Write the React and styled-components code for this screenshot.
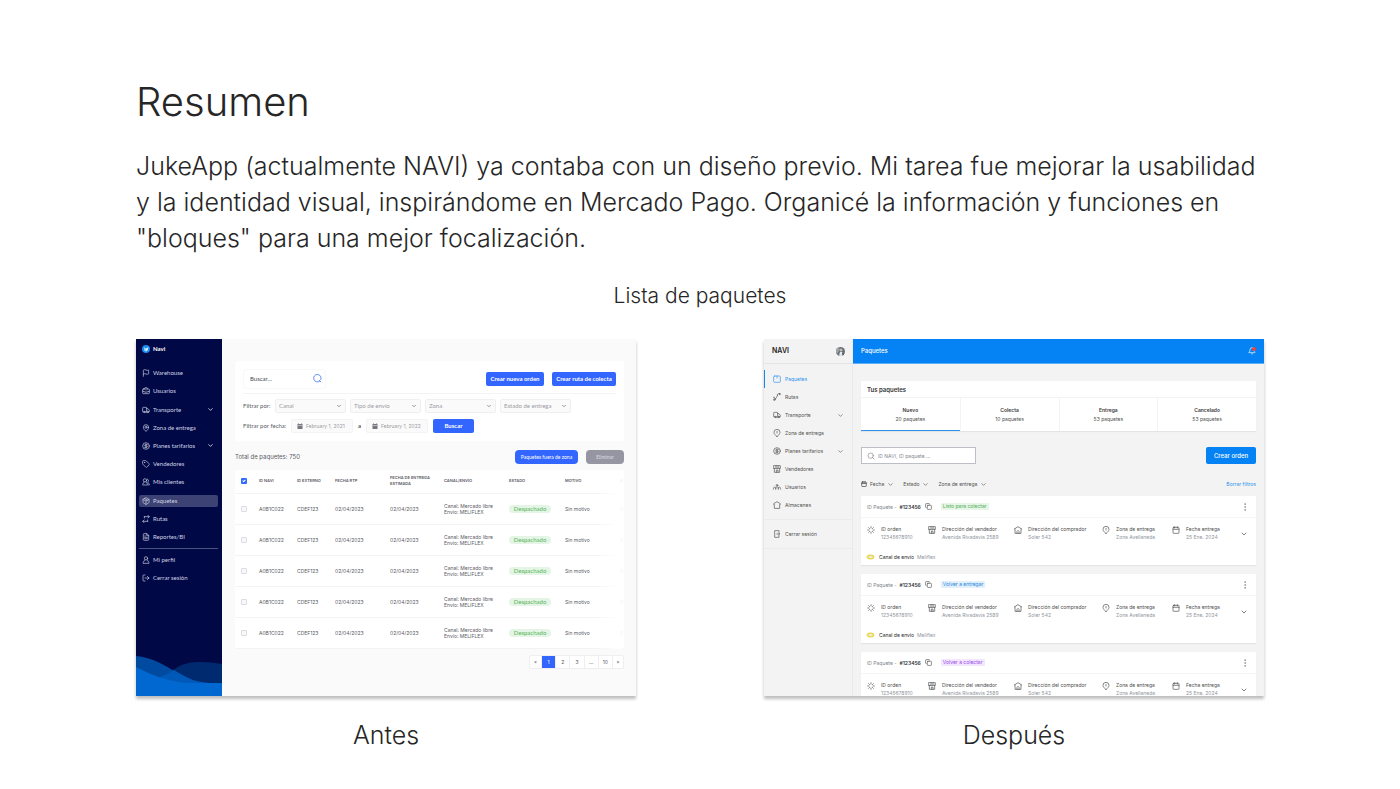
import React from "react";
import styled, { createGlobalStyle, css } from "styled-components";
import {
  Flag, BriefcaseBusiness, Truck, MapPin, CircleDollarSign, Tag, Package,
  FileText, LogOut, ChevronDown, Search, Calendar, Copy, EllipsisVertical, Loader, Bell,
} from "lucide-react";

const Global = createGlobalStyle`
  *, *::before, *::after { box-sizing: border-box; }
  body { margin: 0; background: #fff; font-family: Inter, "Liberation Sans", sans-serif; color: #262626; }
  h1, h2, p, ul, figure { margin: 0; padding: 0; }
  ul { list-style: none; }
  a { color: inherit; text-decoration: none; }
  button, input, select { font: inherit; color: inherit; margin: 0; }
  svg { flex: none; display: block; }
`;

/* ---------- Page ---------- */
const Page = styled.main`
  padding: 78px 136px 36px;
`;
const Title = styled.h1`
  font-size: 40px;
  font-weight: 300;
  line-height: 48px;
  margin-bottom: 22px;
`;
const Lead = styled.p`
  font-size: 25px;
  font-weight: 300;
  line-height: 36px;
`;
const Subtitle = styled.h2`
  margin: 25px 0 28px;
  font-size: 21px;
  font-weight: 300;
  line-height: 30px;
  text-align: center;
`;
const Comparison = styled.div`
  display: grid;
  grid-template-columns: 1fr 1fr;
  gap: 128px;
`;
const Caption = styled.figcaption`
  margin-top: 21px;
  font-size: 25px;
  font-weight: 300;
  line-height: 36px;
  text-align: center;
`;
const Screen = styled.div`
  display: flex;
  aspect-ratio: 500 / 357;
  overflow: hidden;
  background: ${(p) => p.$bg};
  box-shadow: 0 3px 3px rgba(0, 0, 0, 0.26);
  font-size: 5px;
  line-height: 6px;
`;
const latoSmall = css`
  font-family: Lato, "Liberation Sans", sans-serif;
  font-size: 6px;
  line-height: 8px;
`;

/* ---------- Before ---------- */
const DarkSide = styled.nav`
  ${latoSmall}
  display: flex;
  flex-direction: column;
  flex: none;
  width: 86px;
  background: #000846;
  color: #d0d3e4;
`;
const Brand = styled.div`
  display: flex;
  align-items: center;
  gap: 3px;
  height: 20px;
  margin-bottom: 5px;
  padding-left: 6px;
  color: #fff;
  font-weight: 700;
`;
const DarkList = styled.ul`
  display: flex;
  flex-direction: column;
  height: ${(p) => p.$height}px;
  padding: 0 4px 0 3px;
`;
const DarkItem = styled.li`
  display: flex;
  align-items: center;
  flex: 1;
`;
const DarkLink = styled.a`
  display: flex;
  align-items: center;
  flex: 1;
  gap: 3px;
  height: 12px;
  padding: 0 4px 0 3px;
  border-radius: 2px;
  background: ${(p) => (p.$active ? "#3c4273" : "transparent")};
`;
const Label = styled.span`
  flex: 1;
  white-space: nowrap;
`;
const DarkRule = styled.hr`
  width: 79px;
  height: 1px;
  margin: 2px 4px 2px 3px;
  border: 0;
  background: #4d537f;
`;
const WaveArt = styled.svg`
  width: 100%;
  height: 42px;
  margin-top: auto;
`;
const OldMain = styled.div`
  flex: 1;
  min-width: 0;
  padding: 22px 12px 0 13px;
  color: #5a5a64;
`;
const FilterCard = styled.section`
  ${latoSmall}
  height: 80px;
  padding: 8px;
  border-radius: 3px;
  background: #fff;
`;
const Bar = styled.div`
  display: flex;
  align-items: center;
  gap: ${(p) => p.$gap || 0}px;
`;
const TopBar = styled(Bar)`
  height: 25px;
  padding-bottom: 5px;
  border-bottom: 1px solid #f3f3f5;
  margin-bottom: 5px;
`;
const SearchBox = styled.label`
  display: flex;
  align-items: center;
  width: 83px;
  height: 20px;
  margin-right: auto;
  padding: 0 3px 0 6px;
  border: 1px solid #f8f8f8;
  border-radius: 3px;
  color: #3366ff;
`;
const BareInput = styled.input`
  flex: 1;
  width: 100%;
  min-width: 0;
  padding: 0;
  border: 0;
  outline: 0;
  background: none;
  color: ${(p) => p.$color || "#4a4a55"};
  &::placeholder { color: ${(p) => p.$color || "#4a4a55"}; opacity: 1; }
`;
const BlueButton = styled.button`
  width: ${(p) => p.$width}px;
  height: 14px;
  padding: 0;
  border: 0;
  border-radius: ${(p) => p.$radius || 2}px;
  background: ${(p) => (p.$muted ? "#9696a2" : "#3366ff")};
  color: ${(p) => (p.$muted ? "#dcdce2" : "#fff")};
  font-family: Lato, "Liberation Sans", sans-serif;
  font-size: ${(p) => (p.$small ? 5 : 6)}px;
  font-weight: ${(p) => (p.$small ? 400 : 700)};
  white-space: nowrap;
`;
const FieldText = styled.span`
  width: ${(p) => p.$width}px;
  white-space: nowrap;
`;
const SelectWrap = styled.label`
  position: relative;
  width: 71px;
  color: #77777f;
  svg { position: absolute; right: 4px; top: 4px; pointer-events: none; }
`;
const Select = styled.select`
  display: block;
  appearance: none;
  width: 100%;
  height: 14px;
  padding: 0 12px 0 3px;
  border: 1px solid #efeff1;
  border-radius: 2px;
  background: #fafafa;
  color: #9b9ba3;
`;
const DateBox = styled.label`
  display: flex;
  align-items: center;
  gap: 3px;
  width: 62px;
  height: 14px;
  padding: 0 5px;
  border: 1px solid #f3f3f4;
  border-radius: 2px;
  background: #fafafa;
  color: #77777f;
  font-family: Inter, "Liberation Sans", sans-serif;
  font-size: 5px;
`;
const DateRow = styled(Bar)`
  margin-top: 6px;
`;
const DateGap = styled.span`
  width: 13px;
  text-align: center;
  font-weight: 700;
`;
const SearchButton = styled(BlueButton)`
  margin-left: 5px;
`;
const TotalRow = styled(Bar)`
  height: 14px;
  margin: 9px 0 6px;
`;
const Total = styled.p`
  flex: 1;
  font-size: 6px;
  line-height: 8px;
`;
const TableWrap = styled.div`
  position: relative;
  overflow: hidden;
  border-radius: 3px;
  background: #fff;
  &::after {
    content: "";
    position: absolute;
    inset: 0 0 0 auto;
    width: 28px;
    background: linear-gradient(90deg, rgba(255, 255, 255, 0), rgba(255, 255, 255, 0.9) 70%);
    pointer-events: none;
  }
`;
const Table = styled.table`
  width: 100%;
  table-layout: fixed;
  border-collapse: collapse;
  th, td {
    padding: 0;
    border-bottom: 1px solid #f3f3f5;
    text-align: left;
    white-space: nowrap;
  }
  th { height: 23px; font-size: 4px; line-height: 6px; font-weight: 600; }
  td { height: 31px; }
`;
const Col = styled.col`
  width: ${(p) => (p.$w ? p.$w + "px" : "auto")};
`;
const Check = styled.input`
  appearance: none;
  position: relative;
  display: block;
  width: 6px;
  height: 6px;
  margin: 0 0 0 6px;
  border: 1px solid #dcdde2;
  border-radius: 1px;
  background: #f8f8fa;
  &:checked {
    border: 0;
    background: #2f6bff;
  }
  &:checked::after {
    content: "";
    position: absolute;
    left: 2px;
    top: 1px;
    width: 2px;
    height: 3px;
    border: solid #fff;
    border-width: 0 1px 1px 0;
    transform: rotate(45deg);
  }
`;
const Status = styled.span`
  display: block;
  width: 42px;
  height: 8px;
  border-radius: 4px;
  background: #e4f5e6;
  color: #57b45b;
  font-family: Lato, "Liberation Sans", sans-serif;
  font-size: 6px;
  line-height: 8px;
  text-align: center;
`;
const Pager = styled.nav`
  display: flex;
  width: 95px;
  height: 14px;
  margin: 6px 0 0 auto;
  border: 1px solid #efeff1;
  border-radius: 2px;
  background: #fff;
`;
const PageButton = styled.button`
  flex: ${(p) => (p.$end ? "0 0 11px" : "1")};
  padding: 0;
  border: 0;
  border-left: ${(p) => (p.$first ? 0 : 1)}px solid #efeff1;
  background: ${(p) => (p.$on ? "#3366ff" : "transparent")};
  color: ${(p) => (p.$on ? "#fff" : "inherit")};
  line-height: 12px;
`;

/* ---------- After ---------- */
const LightSide = styled.nav`
  flex: none;
  width: 89px;
  border-right: 1px solid #eaeaea;
  color: #505050;
`;
const LightHead = styled.div`
  display: flex;
  align-items: center;
  justify-content: space-between;
  height: 25px;
  padding: 0 7px 0 8px;
  border-bottom: 1px solid #e4e4e4;
`;
const Logo = styled.span`
  color: #222;
  font-size: 7px;
  line-height: 8px;
  font-weight: 600;
`;
const LightList = styled.ul`
  padding: 6px 0 5px;
  & + & { padding: 5px 0; border: solid #ebebeb; border-width: 1px 0; }
`;
const LightLink = styled.a`
  display: flex;
  align-items: center;
  gap: 4px;
  height: 18px;
  padding: 0 8px 0 ${(p) => (p.$active ? 8 : 9)}px;
  border-left: ${(p) => (p.$active ? 1 : 0)}px solid #1687ef;
  color: ${(p) => (p.$active ? "#2d93f0" : "inherit")};
`;
const NewMain = styled.div`
  flex: 1;
  min-width: 0;
`;
const BlueHead = styled.header`
  display: flex;
  align-items: center;
  justify-content: space-between;
  height: 25px;
  padding: 0 8px;
  border-bottom: 1px solid #5caef6;
  background: #0583f5;
  color: #fff;
  font-size: 6px;
  line-height: 8px;
  font-weight: 500;
`;
const NewBody = styled.div`
  padding: 17px 8px 0;
`;
const Panel = styled.section`
  background: #fff;
  box-shadow: 0 1px 1px rgba(0, 0, 0, 0.06);
`;
const PanelTitle = styled.p`
  height: 17px;
  padding-left: 6px;
  border-bottom: 1px solid #f3f3f3;
  font-size: 6px;
  line-height: 17px;
  font-weight: 600;
  color: #333;
`;
const Tabs = styled.div`
  display: grid;
  grid-template-columns: repeat(4, 1fr);
`;
const TabButton = styled.button`
  height: 33px;
  padding: 2px 0 0;
  border: 0;
  border-left: ${(p) => (p.$first ? 0 : 1)}px solid #f3f3f3;
  border-bottom: 1px solid ${(p) => (p.$first ? "#2d93f0" : "#fff")};
  background: none;
  color: #505050;
  line-height: 9px;
  strong, span { display: block; }
  strong { font-weight: 600; color: #3a3a3a; }
`;
const ActionRow = styled(Bar)`
  justify-content: space-between;
  margin-top: 16px;
`;
const NewSearch = styled.label`
  display: flex;
  align-items: center;
  gap: 3px;
  width: 115px;
  height: 17px;
  padding: 0 5px;
  border: 1px solid #bcbfc8;
  background: #fff;
  color: #85878f;
`;
const OrderButton = styled.button`
  width: 50px;
  height: 17px;
  padding: 0;
  border: 0;
  border-radius: 2px;
  background: #0583f5;
  color: #fff;
  font-size: 6px;
  font-weight: 500;
`;
const Filters = styled(Bar)`
  height: 12px;
  margin: 14px 0 6px;
`;
const FilterButton = styled.button`
  display: flex;
  align-items: center;
  gap: 3px;
  margin-right: 9px;
  padding: 0;
  border: 0;
  background: none;
  color: #505050;
  line-height: 6px;
`;
const ClearLink = styled.a`
  margin-left: auto;
  color: #2d93f0;
`;
const Cards = styled.div`
  display: flex;
  flex-direction: column;
  gap: 9px;
`;
const CardHead = styled(Bar)`
  height: 22px;
  padding: 0 6px;
  border-bottom: 1px solid #f5f5f5;
  color: #7c828b;
  strong { color: #333; font-weight: 600; margin: 0 4px 0 3px; }
`;
const tones = {
  green: css`background: #e8f5e9; color: #4caf50;`,
  blue: css`background: #e2f0fc; color: #2584dc;`,
  violet: css`background: #f2e7fe; color: #9747e8;`,
};
const Badge = styled.span`
  margin: 0 auto 0 9px;
  padding: 0 2px;
  border-radius: 1px;
  line-height: 7px;
  ${(p) => tones[p.$tone]}
`;
const IconButton = styled.button`
  display: flex;
  justify-content: center;
  padding: 0;
  border: 0;
  background: none;
  color: #444;
`;
const Details = styled.div`
  display: grid;
  grid-template-columns: 61fr 86fr 88fr 70fr 66fr 12fr;
  align-items: center;
  height: 30px;
  padding: 0 6px;
`;
const Detail = styled.div`
  display: flex;
  gap: 6px;
  color: #4c4c4c;
  white-space: nowrap;
`;
const Muted = styled.span`
  color: #8f959e;
`;
const Value = styled(Muted)`
  display: block;
  margin-top: 2px;
`;
const Expand = styled(IconButton)`
  margin-top: 2px;
`;
const Channel = styled(Bar)`
  height: 17px;
  padding: 0 6px 0 5px;
`;
const ChannelName = styled.span`
  margin: 0 3px 0 4px;
`;
const BellButton = styled(IconButton)`
  position: relative;
  color: #fff;
  &::after {
    content: "";
    position: absolute;
    top: 0;
    right: 0;
    width: 4px;
    height: 4px;
    border-radius: 50%;
    background: #ef4444;
  }
`;

const line = { size: 8, strokeWidth: 2 };
const chevron = { size: 7, strokeWidth: 2 };

function Glyph({ size = 8, children }) {
  return (
    <svg width={size} height={size} viewBox="0 0 24 24" fill="none" stroke="currentColor" strokeWidth="2" strokeLinecap="round" strokeLinejoin="round" aria-hidden="true">
      {children}
    </svg>
  );
}
function ParcelIcon() {
  return <Glyph><rect x="2" y="3" width="20" height="19" rx="3" /><path d="M12 3v6" /></Glyph>;
}
function RouteIcon() {
  return <Glyph><circle cx="4" cy="20" r="2.5" /><circle cx="20" cy="3" r="1.5" fill="currentColor" /><path d="M1 13c3-2 5 0 5 4M7 18c5-2 3-8 6-10M13 8c-1-4 1-6 4-6" /></Glyph>;
}
function PinIcon() {
  return <Glyph><path d="M12 23C8 18 3 15 3 10a9 9 0 0 1 18 0c0 5-5 8-9 13Z" /><path d="M12 7v5" /></Glyph>;
}
function PeopleIcon() {
  return <Glyph><circle cx="12" cy="7" r="2.5" /><path d="M1 19c0-5 2-7 4-7s3 2 3 5M23 19c0-5-2-7-4-7s-3 2-3 5M8 19c0-5 2-8 4-8s4 3 4 8" /></Glyph>;
}
function WarehouseIcon() {
  return <Glyph><path d="M4 21V10H2V8l10-6 10 6v2h-2v11Z" /></Glyph>;
}
function StoreIcon() {
  return <Glyph><path d="M2 2h20v8H2ZM9 2v8M15 2v8M4 10v12h16V10M10 22v-7h5v7" /></Glyph>;
}
function HomeIcon() {
  return <Glyph><path d="M1 9l11-7 11 7M3 9v13h18V9M9 22v-6l3-3 3 3v6" /></Glyph>;
}
function ExitIcon() {
  return <Glyph><path d="M18 7V2H5v20h13v-5M11 12h9M17 9l3 3-3 3" /></Glyph>;
}
function SwapIcon() {
  return <Glyph><path d="M7 5h14M18 1l4 4-4 4M17 19H3M6 15l-4 4 4 4M7 5v4M17 19v-4" /></Glyph>;
}
function PersonIcon() {
  return <Glyph><circle cx="12" cy="7" r="5" /><path d="M8 12l-5 8v2h18v-2l-5-8" /></Glyph>;
}
function ClientsIcon() {
  return <Glyph><circle cx="9" cy="7" r="5" /><path d="M6 12l-4 7v2h15v-2l-4-7M16 3a5 5 0 0 1 1 9l5 7v2h-2" /></Glyph>;
}
function BubbleIcon() {
  return <Glyph size={9}><path d="M18 19a10 10 0 1 1 3-4M17 17l4 4" /></Glyph>;
}
function DateIcon() {
  return (
    <svg width="6" height="6" viewBox="0 0 12 12" fill="currentColor" aria-hidden="true">
      <path d="M1 2h2V0h1v2h4V0h1v2h2v10H1Zm1 3v1h8V5Z" />
    </svg>
  );
}
function BrandMark() {
  return (
    <svg width="8" height="8" viewBox="0 0 16 16" aria-hidden="true">
      <circle cx="8" cy="8" r="8" fill="#168bf2" />
      <path d="M4 5l4 2 5-3-2 7-3 2-4-3Z" fill="#dff2ff" />
      <path d="M4 5l4 2v6l-4-3Z" fill="#8fd0fa" />
    </svg>
  );
}
function Avatar() {
  return (
    <svg width="9" height="9" viewBox="0 0 18 18" role="img" aria-label="Usuario">
      <circle cx="9" cy="9" r="9" fill="#667078" />
      <path d="M0 9a9 9 0 0 1 7-9l-1 8-4 6Z" fill="#98a9a8" />
      <circle cx="10" cy="6" r="3" fill="#d3b9a8" />
      <path d="M6 17l2-7h5l2 6a9 9 0 0 1-9 1Z" fill="#e5e9eb" />
      <path d="M12 10l4 5-3 2Z" fill="#2e3a40" />
    </svg>
  );
}
function ChannelMark() {
  return (
    <svg width="9" height="6" viewBox="0 0 18 12" role="img" aria-label="Mercado Libre">
      <ellipse cx="9" cy="6" rx="7" ry="4" fill="#f6ec9c" stroke="#ecd21c" strokeWidth="2" />
      <path d="M4 5c3-1 7-1 10 0-2 2-3 3-5 3S6 7 4 5Z" fill="#fff" stroke="#c9c98f" strokeWidth="1" />
    </svg>
  );
}
function Waves() {
  return (
    <WaveArt viewBox="0 0 86 42" preserveAspectRatio="none" aria-hidden="true">
      <path d="M0 28C18 28 32 19 42 13 54 6 72 8 86 10V42H0Z" fill="#002a70" />
      <path d="M0 2C22 4 36 17 51 24 64 30 76 30 86 29V42H0Z" fill="#004a9f" />
      <path d="M0 28C14 27 26 24 38 16 54 26 62 30 86 29V42H0Z" fill="#0059b8" />
      <path d="M0 13C18 22 32 28 54 29H86V42H0Z" fill="#0068d0" />
    </WaveArt>
  );
}

const oldMenu = [
  ["Warehouse", Flag], ["Usuarios", BriefcaseBusiness], ["Transporte", Truck, true], ["Zona de entrega", MapPin],
  ["Planes tarifarios", CircleDollarSign, true], ["Vendedores", Tag], ["Mis clientes", ClientsIcon],
  ["Paquetes", Package], ["Rutas", SwapIcon], ["Reportes/BI", FileText],
];
const accountMenu = [["Mi perfil", PersonIcon], ["Cerrar sesión", LogOut]];
const newMenu = [
  ["Paquetes", ParcelIcon], ["Rutas", RouteIcon], ["Transporte", Truck, true], ["Zona de entrega", PinIcon],
  ["Planes tarifarios", CircleDollarSign, true], ["Vendedores", StoreIcon], ["Usuarios", PeopleIcon], ["Almacenes", WarehouseIcon],
];
const details = [
  ["ID orden", "12345678910", Loader], ["Dirección del vendedor", "Avenida Rivadavia 2589", StoreIcon],
  ["Dirección del comprador", "Soler 542", HomeIcon], ["Zona de entrega", "Zona Avellaneda", PinIcon],
  ["Fecha entrega", "25 Ene. 2024", Calendar],
];

function DarkMenu({ items, height }) {
  return (
    <DarkList $height={height}>
      {items.map(([name, Icon, more]) => (
        <DarkItem key={name}>
          <DarkLink href="#" $active={name === "Paquetes"}>
            <Icon {...line} /><Label>{name}</Label>{more && <ChevronDown size={7} strokeWidth={3} />}
          </DarkLink>
        </DarkItem>
      ))}
    </DarkList>
  );
}

function Before() {
  return (
    <Screen $bg="#fafafa">
      <DarkSide aria-label="Menú anterior">
        <Brand><BrandMark />Navi</Brand>
        <DarkMenu items={oldMenu} height={182} />
        <DarkRule />
        <DarkMenu items={accountMenu} height={36} />
        <Waves />
      </DarkSide>
      <OldMain>
        <FilterCard>
          <TopBar $gap={8}>
            <SearchBox><BareInput placeholder="Buscar..." aria-label="Buscar" /><BubbleIcon /></SearchBox>
            <BlueButton $width={58}>Crear nueva orden</BlueButton>
            <BlueButton $width={64}>Crear ruta de colecta</BlueButton>
          </TopBar>
          <Bar $gap={4}>
            <FieldText $width={28}>Filtrar por:</FieldText>
            {["Canal", "Tipo de envío", "Zona", "Estado de entrega"].map((name) => (
              <SelectWrap key={name}>
                <Select aria-label={name}><option>{name}</option></Select>
                <ChevronDown size={6} strokeWidth={3} />
              </SelectWrap>
            ))}
          </Bar>
          <DateRow>
            <FieldText $width={48}>Filtrar por fecha:</FieldText>
            <DateBox><DateIcon /><BareInput defaultValue="February 1, 2021" aria-label="Desde" $color="#9b9ba3" /></DateBox>
            <DateGap>a</DateGap>
            <DateBox><DateIcon /><BareInput defaultValue="February 1, 2022" aria-label="Hasta" $color="#9b9ba3" /></DateBox>
            <SearchButton $width={41}>Buscar</SearchButton>
          </DateRow>
        </FilterCard>
        <TotalRow $gap={8}>
          <Total>Total de paquetes: 750</Total>
          <BlueButton $width={63} $radius={4} $small>Paquetes fuera de zona</BlueButton>
          <BlueButton $width={38} $radius={4} $small $muted>Eliminar</BlueButton>
        </TotalRow>
        <TableWrap>
          <Table>
            <colgroup>{[24, 38, 38, 55, 54, 65, 56, 55, 0].map((w, i) => <Col key={i} $w={w} />)}</colgroup>
            <thead>
              <tr>
                <th><Check type="checkbox" defaultChecked aria-label="Seleccionar todos" /></th>
                <th>ID NAVI</th><th>ID EXTERNO</th><th>FECHA RTP</th><th>FECHA DE ENTREGA<br />ESTIMADA</th>
                <th>CANAL/ENVÍO</th><th>ESTADO</th><th>MOTIVO</th><th>A</th>
              </tr>
            </thead>
            <tbody>
              {[1, 2, 3, 4, 5].map((n) => (
                <tr key={n}>
                  <td><Check type="checkbox" aria-label={`Seleccionar fila ${n}`} /></td>
                  <td>A0B1C022</td><td>CDEF123</td><td>02/04/2023</td><td>02/04/2023</td>
                  <td>Canal: Mercado libre<br />Envío: MELIFLEX</td>
                  <td><Status>Despachado</Status></td><td>Sin motivo</td><td>0</td>
                </tr>
              ))}
            </tbody>
          </Table>
        </TableWrap>
        <Pager aria-label="Paginación">
          {["«", "1", "2", "3", "...", "10", "»"].map((t, i) => (
            <PageButton key={t} $first={i === 0} $end={i === 0 || i === 6} $on={t === "1"}>{t}</PageButton>
          ))}
        </Pager>
      </OldMain>
    </Screen>
  );
}

function OrderCard({ tone, status, channel }) {
  return (
    <Panel>
      <CardHead>
        ID Paquete - <strong>#123456</strong>
        <IconButton aria-label="Copiar"><Copy size={7} strokeWidth={2} /></IconButton>
        <Badge $tone={tone}>{status}</Badge>
        <IconButton aria-label="Opciones"><EllipsisVertical size={10} strokeWidth={1} /></IconButton>
      </CardHead>
      <Details>
        {details.map(([name, value, Icon]) => (
          <Detail key={name}><Icon {...line} /><div>{name}<Value>{value}</Value></div></Detail>
        ))}
        <Expand aria-label="Ver más"><ChevronDown size={8} strokeWidth={2} /></Expand>
      </Details>
      {channel && <Channel><ChannelMark /><ChannelName>Canal de envío</ChannelName><Muted>{channel}</Muted></Channel>}
    </Panel>
  );
}

function After() {
  return (
    <Screen $bg="#f3f3f3">
      <LightSide aria-label="Menú nuevo">
        <LightHead><Logo>NAVI</Logo><Avatar /></LightHead>
        <LightList>
          {newMenu.map(([name, Icon, more]) => (
            <li key={name}>
              <LightLink href="#" $active={name === "Paquetes"}>
                <Icon {...line} /><Label>{name}</Label>{more && <ChevronDown {...chevron} />}
              </LightLink>
            </li>
          ))}
        </LightList>
        <LightList>
          <li><LightLink href="#"><ExitIcon /><Label>Cerrar sesión</Label></LightLink></li>
        </LightList>
      </LightSide>
      <NewMain>
        <BlueHead>Paquetes<BellButton aria-label="Notificaciones"><Bell size={8} strokeWidth={2} /></BellButton></BlueHead>
        <NewBody>
          <Panel>
            <PanelTitle>Tus paquetes</PanelTitle>
            <Tabs>
              {[["Nuevo", 20], ["Colecta", 10], ["Entrega", 53], ["Cancelado", 53]].map(([name, n], i) => (
                <TabButton key={name} $first={i === 0}><strong>{name}</strong><span>{n} paquetes</span></TabButton>
              ))}
            </Tabs>
          </Panel>
          <ActionRow>
            <NewSearch><Search size={8} strokeWidth={2} /><BareInput $color="#85878f" placeholder="ID NAVI, ID paquete ..." aria-label="Buscar paquete" /></NewSearch>
            <OrderButton>Crear orden</OrderButton>
          </ActionRow>
          <Filters>
            <FilterButton><Calendar size={6} strokeWidth={3} />Fecha<ChevronDown {...chevron} /></FilterButton>
            <FilterButton>Estado<ChevronDown {...chevron} /></FilterButton>
            <FilterButton>Zona de entrega<ChevronDown {...chevron} /></FilterButton>
            <ClearLink href="#">Borrar filtros</ClearLink>
          </Filters>
          <Cards>
            <OrderCard tone="green" status="Listo para colectar" channel="Meliflex" />
            <OrderCard tone="blue" status="Volver a entregar" channel="Meliflex" />
            <OrderCard tone="violet" status="Volver a colectar" />
          </Cards>
        </NewBody>
      </NewMain>
    </Screen>
  );
}

export default function App() {
  return (
    <>
      <Global />
      <Page>
        <Title>Resumen</Title>
        <Lead>
          JukeApp (actualmente NAVI) ya contaba con un diseño previo. Mi tarea fue mejorar la usabilidad
          y la identidad visual, inspirándome en Mercado Pago. Organicé la información y funciones en
          "bloques" para una mejor focalización.
        </Lead>
        <Subtitle>Lista de paquetes</Subtitle>
        <Comparison>
          <figure><Before /><Caption>Antes</Caption></figure>
          <figure><After /><Caption>Después</Caption></figure>
        </Comparison>
      </Page>
    </>
  );
}
